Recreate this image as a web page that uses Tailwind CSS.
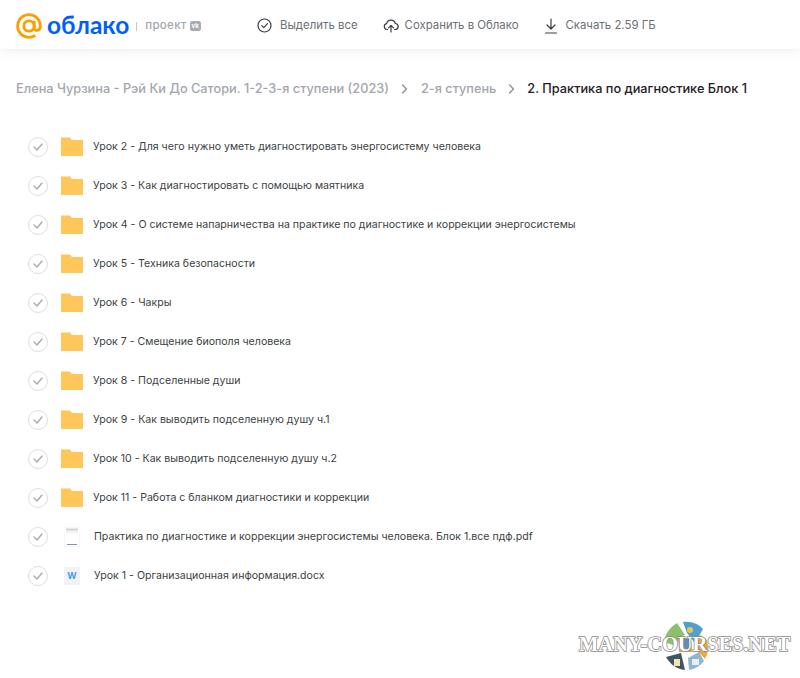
<!doctype html>
<html lang="ru">
<head>
<meta charset="utf-8">
<script src="https://cdn.jsdelivr.net/npm/@tailwindcss/browser@4"></script>
</head>
<body class="bg-white font-['Inter','Noto_Sans',sans-serif]">
<div class="relative w-[800px] h-[678px] overflow-hidden">
  <header class="h-[49px] pt-[3px] flex items-center bg-white shadow-[0_2px_12px_rgba(0,0,0,0.07)] relative">
    <div class="flex items-center pl-[16px] w-[257px] shrink-0">
      <svg class="w-[26px] h-[26px] shrink-0" viewBox="0 0 26 26" fill="none" stroke="#ff9e00" stroke-width="2.8"><circle cx="13" cy="13" r="5.2"/><path d="M18.2 8v6.5c0 4.2 6.2 4 6.2-1.500C24.400 6.700 19.300 1.600 13 1.600S1.600 6.700 1.600 13 6.700 24.400 13 24.400c2.400 0 4.500-.7 6.300-1.900"/></svg>
      <span class="ml-[5px] text-[24.500px] leading-none font-bold text-[#005ff9] font-['Lato',sans-serif] relative top-[-1px]">облако</span>
      <span class="ml-[7px] w-px h-[9px] bg-[#c4c6cc]"></span>
      <span class="ml-[8px] text-[11.500px] font-medium text-[#a3a6ae] tracking-[0.3px]">проект</span>
      <span class="ml-[3px] w-[11px] h-[10px] rounded-[2px] bg-[#a9acb4] flex items-center justify-center text-[6px] font-bold leading-none text-white">vk</span>
    </div>
    <div class="flex items-center text-[#6b6f76] text-[11.400px]">
      <svg class="w-[15px] h-[15px] shrink-0" viewBox="0 0 15 15" fill="none" stroke="#3a3d42" stroke-width="1.200"><circle cx="7.500" cy="7.500" r="6.500"/><path d="M4.800 7.700l2 2 3.600-4" stroke-linecap="round" stroke-linejoin="round"/></svg>
      <span class="ml-[8px]">Выделить все</span>
      <svg class="ml-[25px] w-[16px] h-[15px] shrink-0" viewBox="0 0 16 15" fill="none" stroke="#3a3d42" stroke-width="1.200" stroke-linecap="round" stroke-linejoin="round"><path d="M4.500 11.500H4A3 3 0 0 1 3.600 5.600 4.500 4.500 0 0 1 12.300 5.500 3 3 0 0 1 12 11.500h-.5"/><path d="M8 14V7.500M5.500 9.800 8 7.300l2.500 2.500"/></svg>
      <span class="ml-[6px]">Сохранить в Облако</span>
      <svg class="ml-[26px] w-[14px] h-[16px] shrink-0" viewBox="0 0 14 16" fill="none" stroke="#3a3d42" stroke-width="1.200" stroke-linecap="round" stroke-linejoin="round"><path d="M7 1v9.500M3 7l4 4 4-4M1.500 15h11"/></svg>
      <span class="ml-[7px]">Скачать 2.59 ГБ</span>
    </div>
  </header>

  <nav class="h-[38px] mt-[21px] pl-[16px] flex items-center text-[12.750px] font-medium whitespace-nowrap">
    <span class="text-[#a3a6ae]">Елена Чурзина - Рэй Ки До Сатори. 1-2-3-я ступени (2023)</span>
    <svg class="mx-[12.500px] w-[7px] h-[10px] shrink-0" viewBox="0 0 7 10" fill="none" stroke="#8d9098" stroke-width="1.400" stroke-linecap="round" stroke-linejoin="round"><path d="M1.500 1l4 4-4 4"/></svg>
    <span class="text-[#a3a6ae]">2-я ступень</span>
    <svg class="mx-[12px] w-[7px] h-[10px] shrink-0" viewBox="0 0 7 10" fill="none" stroke="#8d9098" stroke-width="1.400" stroke-linecap="round" stroke-linejoin="round"><path d="M1.500 1l4 4-4 4"/></svg>
    <span class="text-[#1f2023]">2. Практика по диагностике Блок 1</span>
  </nav>

  <ul class="mt-[19px] pl-[28px] text-[#3d3f44] text-[10.580px] whitespace-nowrap">
    <li class="h-[39px] flex items-center">
      <span class="w-[20px] h-[20px] rounded-full border border-[#dcdee2] flex items-center justify-center shrink-0"><svg class="w-[10px] h-[8px]" viewBox="0 0 10 8" fill="none" stroke="#a8abb2" stroke-width="1.400" stroke-linecap="round" stroke-linejoin="round"><path d="M1 4l3 3 5-6"/></svg></span>
      <svg class="ml-[13px] w-[22px] h-[19px] shrink-0" viewBox="0 0 22 19"><path d="M0 .5h9l2 2.500h11V19H0z" fill="#ffc759"/></svg>
      <span class="ml-[10px]">Урок 2 - Для чего нужно уметь диагностировать энергосистему человека</span>
    </li>
    <li class="h-[39px] flex items-center">
      <span class="w-[20px] h-[20px] rounded-full border border-[#dcdee2] flex items-center justify-center shrink-0"><svg class="w-[10px] h-[8px]" viewBox="0 0 10 8" fill="none" stroke="#a8abb2" stroke-width="1.400" stroke-linecap="round" stroke-linejoin="round"><path d="M1 4l3 3 5-6"/></svg></span>
      <svg class="ml-[13px] w-[22px] h-[19px] shrink-0" viewBox="0 0 22 19"><path d="M0 .5h9l2 2.500h11V19H0z" fill="#ffc759"/></svg>
      <span class="ml-[10px]">Урок 3 - Как диагностировать с помощью маятника</span>
    </li>
    <li class="h-[39px] flex items-center">
      <span class="w-[20px] h-[20px] rounded-full border border-[#dcdee2] flex items-center justify-center shrink-0"><svg class="w-[10px] h-[8px]" viewBox="0 0 10 8" fill="none" stroke="#a8abb2" stroke-width="1.400" stroke-linecap="round" stroke-linejoin="round"><path d="M1 4l3 3 5-6"/></svg></span>
      <svg class="ml-[13px] w-[22px] h-[19px] shrink-0" viewBox="0 0 22 19"><path d="M0 .5h9l2 2.500h11V19H0z" fill="#ffc759"/></svg>
      <span class="ml-[10px]">Урок 4 - О системе напарничества на практике по диагностике и коррекции энергосистемы</span>
    </li>
    <li class="h-[39px] flex items-center">
      <span class="w-[20px] h-[20px] rounded-full border border-[#dcdee2] flex items-center justify-center shrink-0"><svg class="w-[10px] h-[8px]" viewBox="0 0 10 8" fill="none" stroke="#a8abb2" stroke-width="1.400" stroke-linecap="round" stroke-linejoin="round"><path d="M1 4l3 3 5-6"/></svg></span>
      <svg class="ml-[13px] w-[22px] h-[19px] shrink-0" viewBox="0 0 22 19"><path d="M0 .5h9l2 2.500h11V19H0z" fill="#ffc759"/></svg>
      <span class="ml-[10px]">Урок 5 - Техника безопасности</span>
    </li>
    <li class="h-[39px] flex items-center">
      <span class="w-[20px] h-[20px] rounded-full border border-[#dcdee2] flex items-center justify-center shrink-0"><svg class="w-[10px] h-[8px]" viewBox="0 0 10 8" fill="none" stroke="#a8abb2" stroke-width="1.400" stroke-linecap="round" stroke-linejoin="round"><path d="M1 4l3 3 5-6"/></svg></span>
      <svg class="ml-[13px] w-[22px] h-[19px] shrink-0" viewBox="0 0 22 19"><path d="M0 .5h9l2 2.500h11V19H0z" fill="#ffc759"/></svg>
      <span class="ml-[10px]">Урок 6 - Чакры</span>
    </li>
    <li class="h-[39px] flex items-center">
      <span class="w-[20px] h-[20px] rounded-full border border-[#dcdee2] flex items-center justify-center shrink-0"><svg class="w-[10px] h-[8px]" viewBox="0 0 10 8" fill="none" stroke="#a8abb2" stroke-width="1.400" stroke-linecap="round" stroke-linejoin="round"><path d="M1 4l3 3 5-6"/></svg></span>
      <svg class="ml-[13px] w-[22px] h-[19px] shrink-0" viewBox="0 0 22 19"><path d="M0 .5h9l2 2.500h11V19H0z" fill="#ffc759"/></svg>
      <span class="ml-[10px]">Урок 7 - Смещение биополя человека</span>
    </li>
    <li class="h-[39px] flex items-center">
      <span class="w-[20px] h-[20px] rounded-full border border-[#dcdee2] flex items-center justify-center shrink-0"><svg class="w-[10px] h-[8px]" viewBox="0 0 10 8" fill="none" stroke="#a8abb2" stroke-width="1.400" stroke-linecap="round" stroke-linejoin="round"><path d="M1 4l3 3 5-6"/></svg></span>
      <svg class="ml-[13px] w-[22px] h-[19px] shrink-0" viewBox="0 0 22 19"><path d="M0 .5h9l2 2.500h11V19H0z" fill="#ffc759"/></svg>
      <span class="ml-[10px]">Урок 8 - Подселенные души</span>
    </li>
    <li class="h-[39px] flex items-center">
      <span class="w-[20px] h-[20px] rounded-full border border-[#dcdee2] flex items-center justify-center shrink-0"><svg class="w-[10px] h-[8px]" viewBox="0 0 10 8" fill="none" stroke="#a8abb2" stroke-width="1.400" stroke-linecap="round" stroke-linejoin="round"><path d="M1 4l3 3 5-6"/></svg></span>
      <svg class="ml-[13px] w-[22px] h-[19px] shrink-0" viewBox="0 0 22 19"><path d="M0 .5h9l2 2.500h11V19H0z" fill="#ffc759"/></svg>
      <span class="ml-[10px]">Урок 9 - Как выводить подселенную душу ч.1</span>
    </li>
    <li class="h-[39px] flex items-center">
      <span class="w-[20px] h-[20px] rounded-full border border-[#dcdee2] flex items-center justify-center shrink-0"><svg class="w-[10px] h-[8px]" viewBox="0 0 10 8" fill="none" stroke="#a8abb2" stroke-width="1.400" stroke-linecap="round" stroke-linejoin="round"><path d="M1 4l3 3 5-6"/></svg></span>
      <svg class="ml-[13px] w-[22px] h-[19px] shrink-0" viewBox="0 0 22 19"><path d="M0 .5h9l2 2.500h11V19H0z" fill="#ffc759"/></svg>
      <span class="ml-[10px]">Урок 10 - Как выводить подселенную душу ч.2</span>
    </li>
    <li class="h-[39px] flex items-center">
      <span class="w-[20px] h-[20px] rounded-full border border-[#dcdee2] flex items-center justify-center shrink-0"><svg class="w-[10px] h-[8px]" viewBox="0 0 10 8" fill="none" stroke="#a8abb2" stroke-width="1.400" stroke-linecap="round" stroke-linejoin="round"><path d="M1 4l3 3 5-6"/></svg></span>
      <svg class="ml-[13px] w-[22px] h-[19px] shrink-0" viewBox="0 0 22 19"><path d="M0 .5h9l2 2.500h11V19H0z" fill="#ffc759"/></svg>
      <span class="ml-[10px]">Урок 11 - Работа с бланком диагностики и коррекции</span>
    </li>
    <li class="h-[39px] flex items-center">
      <span class="w-[20px] h-[20px] rounded-full border border-[#dcdee2] flex items-center justify-center shrink-0"><svg class="w-[10px] h-[8px]" viewBox="0 0 10 8" fill="none" stroke="#a8abb2" stroke-width="1.400" stroke-linecap="round" stroke-linejoin="round"><path d="M1 4l3 3 5-6"/></svg></span>
      <svg class="ml-[16px] w-[16px] h-[20px] shrink-0" viewBox="0 0 16 20"><rect width="16" height="20" fill="#f8f8f9"/><rect x="1" y="1" width="14" height="18" fill="#fff"/><rect x="2" y="1.500" width="12" height="2" fill="#cfd0d4"/><rect x="2" y="4.500" width="12" height="1" fill="#e2e3e6"/><rect x="3" y="17" width="10" height="1" fill="#7f93b5"/></svg>
      <span class="ml-[14px]">Практика по диагностике и коррекции энергосистемы человека. Блок 1.все пдф.pdf</span>
    </li>
    <li class="h-[39px] flex items-center">
      <span class="w-[20px] h-[20px] rounded-full border border-[#dcdee2] flex items-center justify-center shrink-0"><svg class="w-[10px] h-[8px]" viewBox="0 0 10 8" fill="none" stroke="#a8abb2" stroke-width="1.400" stroke-linecap="round" stroke-linejoin="round"><path d="M1 4l3 3 5-6"/></svg></span>
      <span class="ml-[16px] w-[16px] h-[18px] bg-[#f1f2f4] flex items-center justify-center text-[9px] leading-none font-bold text-[#4a9cf0] shrink-0">W</span>
      <span class="ml-[14px]">Урок 1 - Организационная информация.docx</span>
    </li>
  </ul>

  <div class="absolute left-[661px] top-[621px] w-[50px] h-[50px]">
    <svg class="w-[50px] h-[50px]" viewBox="0 0 50 50">
      <path d="M3 21 C4 13 9 6 16 2 L24 14 C19 16 16 20 15 25 Z" fill="#8dc06a"/>
      <path d="M22 1 C30 0 38 3 42 8 L34 22 L26 12 Z" fill="#4f9fd0"/>
      <circle cx="29" cy="9" r="3" fill="#e8c84a"/>
      <path d="M38 13 L46 19 C48 26 47 33 44 38 L34 27 Z" fill="#f0a640"/>
      <path d="M27 37 L38 31 L43 40 C39 45 34 48 28 49 Z" fill="#8fb5cf"/>
      <path d="M5 36 L20 32 L24 49 C15 48 9 43 5 36 Z" fill="#3f5468"/>
      <path d="M17 17 L30 17 L31 31 L18 31 Z" fill="#d9a24e"/>
      <rect x="20" y="18" width="8" height="10" fill="#5e8fb5"/>
      <rect x="13" y="38" width="6" height="7" fill="#f3e6a8"/>
      <rect x="31" y="38" width="7" height="6" fill="#e4eef4"/>
    </svg>
  </div>
  <div class="absolute left-[579px] top-[632px] text-[20.500px] leading-[24px] font-bold whitespace-nowrap text-white font-['Liberation_Serif',serif] tracking-[-0.1px] [-webkit-text-stroke:1.500px_#8a8a8a] [paint-order:stroke_fill]">MANY-COURSES.NET</div>
</div>
</body>
</html>
